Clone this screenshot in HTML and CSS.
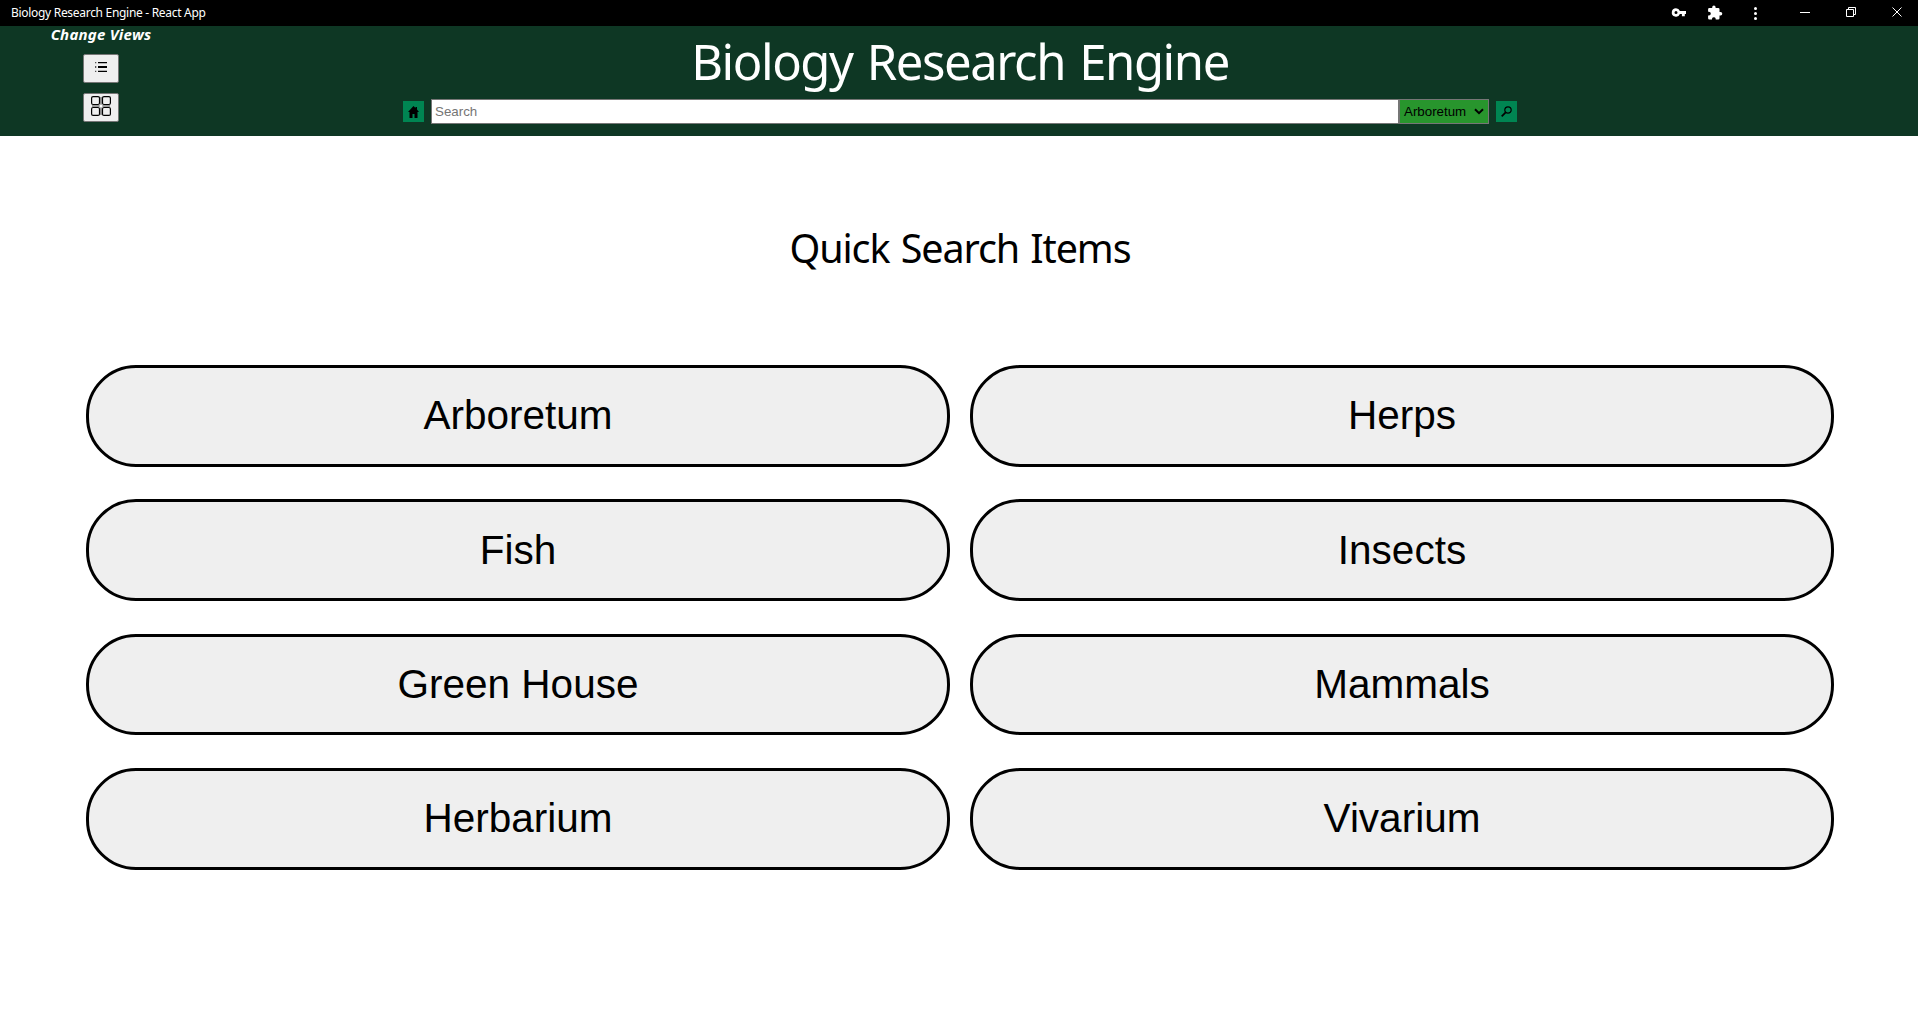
FILE: index.html
```html
<!DOCTYPE html>
<html lang="en">
<head>
<meta charset="utf-8">
<title>Biology Research Engine</title>
<link rel="stylesheet" href="styles.css">
</head>
<body>
<div class="titlebar">
  <span class="titlebar-text">Biology Research Engine - React App</span>
  <div class="titlebar-icons">
    <svg width="278" height="26" viewBox="0 0 278 26">
      <g fill="#fff">
        <path fill-rule="evenodd" d="M36 8.300a4.200 4.200 0 0 1 3.900 2.700H46v3h-1.200v2.200h-2.900V14h-2A4.200 4.200 0 1 1 36 8.300zM36 11a1.500 1.500 0 1 0 0 3 1.500 1.500 0 0 0 0-3z"/>
        <path d="M80.600 12H79.500V9.200A1.300 1.300 0 0 0 78.200 7.900H75.600V7.200a1.700 1.700 0 0 0-3.400 0v.7h-2.800A1.300 1.300 0 0 0 68.100 9.200v2.500h.8a1.900 1.900 0 0 1 0 3.800h-.8v2.700a1.300 1.300 0 0 0 1.300 1.300h2.600v-.8a1.900 1.900 0 0 1 3.700 0v.8h2.500a1.300 1.300 0 0 0 1.300-1.300v-2.800h1.100a1.700 1.700 0 0 0 0-3.400z"/>
        <circle cx="115.500" cy="8.500" r="1.500"/><circle cx="115.500" cy="13.500" r="1.500"/><circle cx="115.500" cy="18.500" r="1.500"/>
        <path d="M160 12h10v1h-10z"/>
      </g>
      <path fill="none" stroke="#fff" d="M206.500 9.500h7v7h-7zM208.500 9.500v-2h7v7h-2M252.500 7.500l9 9M261.500 7.500l-9 9"/>
    </svg>
  </div>
</div>
<header class="header">
  <div class="views">
    <div class="views-label">Change Views</div>
    <button class="view-btn" aria-label="List">
      <svg width="12" height="12" viewBox="0 0 12 12"><path d="M3 1h9v1.200H3zM3 5h9v2H3zM3 9.800h9V11H3z"/><path fill="#555" d="M0 1h1.300v1.200H0zM0 5h1.300v2H0zM0 9.800h1.300V11H0z"/></svg>
    </button>
    <button class="view-btn" aria-label="Grid">
      <svg width="20" height="20" viewBox="0 0 20 20"><path fill="#999" d="M1 9h18v2H1zM9 1h2v18H9z"/><g fill="#efefef" stroke="#000" stroke-width="1.200"><rect x=".6" y=".6" width="7.900" height="7.900" rx="1.500"/><rect x="11.500" y=".6" width="7.900" height="7.900" rx="1.500"/><rect x=".6" y="11.500" width="7.900" height="7.900" rx="1.500"/><rect x="11.500" y="11.500" width="7.900" height="7.900" rx="1.500"/></g><circle cx="10" cy="10" r="1.500" fill="#fff"/></svg>
    </button>
  </div>
  <div class="center">
    <h1 class="title">Biology Research Engine</h1>
    <div class="search">
      <button class="icon-btn" aria-label="Home"><svg width="11" height="12" viewBox="0 0 11 12"><path d="M5.500 0L7.500 2V1H9v2.500L11 6H9.500v6h-3V8h-2v4h-3V6H0z"/></svg></button>
      <div class="field">
        <input class="input" placeholder="Search">
        <div class="select"><span>Arboretum</span><svg width="10" height="7" viewBox="0 0 10 7"><path d="M1 1.200l4 4 4-4" fill="none" stroke="#000" stroke-width="2"/></svg></div>
      </div>
      <button class="icon-btn" aria-label="Go"><svg width="11" height="11" viewBox="0 0 11 11"><g fill="none" stroke="#000"><circle cx="7" cy="4" r="3.200" stroke-width="1.200"/><path d="M4.700 6.300L.7 10.300" stroke-width="1.800"/></g></svg></button>
    </div>
  </div>
</header>
<main class="main">
  <h2 class="heading">Quick Search Items</h2>
  <div class="grid">
    <button class="card">Arboretum</button><button class="card">Herps</button>
    <button class="card">Fish</button><button class="card">Insects</button>
    <button class="card">Green House</button><button class="card">Mammals</button>
    <button class="card">Herbarium</button><button class="card">Vivarium</button>
  </div>
</main>
</body>
</html>
```
FILE: styles.css
```css
* { box-sizing: border-box; }
body { margin: 0; background: #fff; color: #000; font-family: "Noto Sans", sans-serif; overflow: hidden; }
svg { display: block; }
button { font: inherit; color: #000; padding: 0; margin: 0; }
.titlebar { height: 26px; background: #000; color: #fff; display: flex; justify-content: space-between; align-items: center; }
.titlebar-text { padding-left: 11px; font-size: 12px; line-height: 26px; letter-spacing: -0.3px; }
.header { height: 110px; background: #0e3724; color: #fff; display: grid; grid-template-columns: 202px 1fr 200px; }
.views { display: flex; flex-direction: column; align-items: center; }
.views-label { height: 28px; font-size: 15px; line-height: 17px; font-weight: 700; font-style: italic; letter-spacing: 0.25px; }
.view-btn { width: 36px; height: 29px; margin-bottom: 10px; padding-bottom: 3px; background: #efefef; border: 1px solid #767676; border-radius: 2px; display: flex; align-items: center; justify-content: center; }
.center { display: flex; flex-direction: column; align-items: center; }
.title { margin: 0; height: 73px; font-size: 49px; line-height: 70px; font-weight: 400; letter-spacing: -1.45px; word-spacing: 3px; white-space: nowrap; }
.search { display: flex; align-items: center; gap: 7px; height: 25px; }
.icon-btn { width: 21px; height: 21px; background: #008552; border: 0; display: flex; align-items: center; justify-content: center; }
.field { display: flex; }
.input { width: 968px; height: 25px; border: 1px solid #767676; background: #fff; padding: 1px 3px; font: 13.33px "Liberation Sans", sans-serif; }
.input::placeholder { color: #757575; }
.select { width: 90px; height: 25px; border: 1px solid #767676; background: #28952d; color: #000; font: 13.33px "Liberation Sans", sans-serif; display: flex; align-items: center; justify-content: space-between; padding: 0 4px; }
.main { padding: 86px 84px 0 86px; }
.heading { margin: 0; height: 143.200px; font-size: 39.500px; line-height: 52px; font-weight: 400; text-align: center; letter-spacing: -1.100px; word-spacing: 2px; }
.grid { display: grid; grid-template-columns: 864px 864px; gap: 32.700px 20px; }
.card { height: 101.600px; border: 3px solid #000; border-radius: 50px; background: #efefef; font: 40.500px "Liberation Sans", sans-serif; }
```
